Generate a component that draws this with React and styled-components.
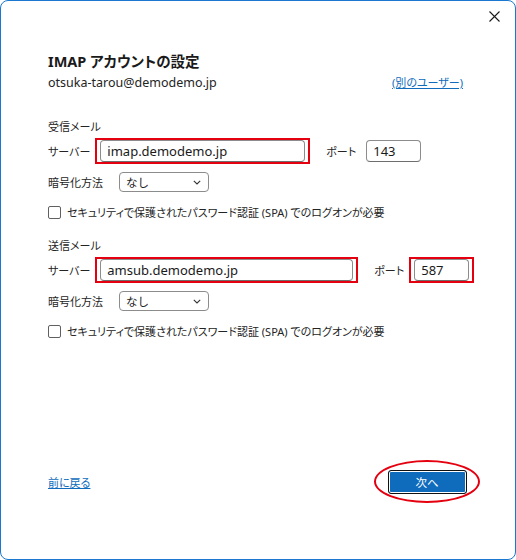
import React from 'react'
import styled, { createGlobalStyle } from 'styled-components'

const GlobalStyle = createGlobalStyle`
  html, body {
    margin: 0;
    padding: 0;
    background: #ffffff;
  }
  body {
    font-family: "Noto Sans", "Noto Sans CJK JP", sans-serif;
    color: #1f1f1f;
  }
`

function App() {
  return (
    <>
      <GlobalStyle />
      <Window>
        <TitleBar>
          <CloseButton aria-label="閉じる">
            <svg width="11" height="11" viewBox="0 0 11 11">
              <path d="M0.5 0.5 L10.5 10.5 M10.5 0.5 L0.5 10.5" stroke="#1a1a1a" strokeWidth="1.1" fill="none" />
            </svg>
          </CloseButton>
        </TitleBar>

        <Main>
          <Heading>IMAP アカウントの設定</Heading>
          <AccountRow>
            <Email>otsuka-tarou@demodemo.jp</Email>
            <Link href="#">(別のユーザー)</Link>
          </AccountRow>

          <ServerSection
            title="受信メール"
            server="imap.demodemo.jp"
            serverWidth={205}
            port="143"
            marked={false}
            top={27}
          />
          <ServerSection
            title="送信メール"
            server="amsub.demodemo.jp"
            serverWidth={253}
            port="587"
            marked={true}
            top={16}
          />
        </Main>

        <Footer>
          <Link href="#">前に戻る</Link>
          <Ring>
            <NextButton>次へ</NextButton>
          </Ring>
        </Footer>
      </Window>
    </>
  )
}

function ServerSection({ title, server, serverWidth, port, marked, top }) {
  return (
    <Section $top={top}>
      <SectionTitle>{title}</SectionTitle>
      <FieldRow>
        <Label>サーバー</Label>
        <Field $marked>
          <TextInput $width={serverWidth} defaultValue={server} readOnly />
        </Field>
        <Label $gap={11}>ポート</Label>
        <Field $marked={marked}>
          <TextInput $width={55} defaultValue={port} readOnly />
        </Field>
      </FieldRow>
      <SelectRow>
        <Label>暗号化方法</Label>
        <Select>
          <span>なし</span>
          <svg width="8" height="5" viewBox="0 0 8 5">
            <path d="M0.8 0.8 L4 4 L7.2 0.8" stroke="#333" strokeWidth="1.1" fill="none" />
          </svg>
        </Select>
      </SelectRow>
      <CheckRow>
        <Box />
        <CheckText>セキュリティで保護されたパスワード認証 (SPA) でのログオンが必要</CheckText>
      </CheckRow>
    </Section>
  )
}

export default App

const Window = styled.div`
  box-sizing: border-box;
  width: 516px;
  height: 560px;
  border: 1px solid #1b78d0;
  border-radius: 8px;
  background: #ffffff;
  display: flex;
  flex-direction: column;
  overflow: hidden;
`

const TitleBar = styled.div`
  height: 29px;
  display: flex;
  justify-content: flex-end;
  align-items: center;
  padding-right: 8px;
`

const CloseButton = styled.button`
  width: 26px;
  height: 26px;
  border: none;
  background: transparent;
  display: flex;
  align-items: center;
  justify-content: center;
  padding: 0;
  margin-top: 1px;
`

const Main = styled.div`
  flex: 1;
  padding: 0 52px 0 47px;
  display: flex;
  flex-direction: column;
`

const Heading = styled.h1`
  margin: 21px 0 0;
  font-size: 14.5px;
  line-height: 20px;
  font-weight: 700;
  color: #1a1a1a;
  font-feature-settings: "palt";
`

const AccountRow = styled.div`
  margin-top: 2px;
  display: flex;
  justify-content: space-between;
  align-items: center;
  height: 18px;
`

const Email = styled.span`
  font-size: 12.5px;
  color: #242424;
`

const Link = styled.a`
  font-size: 11px;
  color: #0f6cbd;
  text-decoration: underline;
  font-feature-settings: "palt";
  white-space: nowrap;
`

const Section = styled.section`
  margin-top: ${p => p.$top}px;
  display: flex;
  flex-direction: column;
`

const SectionTitle = styled.div`
  font-size: 11px;
  line-height: 18px;
  height: 18px;
  color: #242424;
  font-feature-settings: "palt";
`

const FieldRow = styled.div`
  margin-top: 2px;
  display: flex;
  align-items: center;
  gap: 5px;
`

const Label = styled.span`
  flex-shrink: 0;
  white-space: nowrap;
  font-size: 11px;
  color: #242424;
  font-feature-settings: "palt";
  margin-left: ${p => p.$gap || 0}px;
`

const Field = styled.div`
  flex-shrink: 0;
  display: flex;
  padding: 0 3px;
  border: 2px solid ${p => (p.$marked ? '#e5000f' : 'transparent')};
`

const TextInput = styled.input`
  box-sizing: border-box;
  width: ${p => p.$width}px;
  height: 22px;
  border: 1px solid #8c8c8c;
  border-bottom-color: #6e6e6e;
  border-radius: 4px;
  padding: 0 6px;
  font-family: "Noto Sans", sans-serif;
  font-size: 13px;
  color: #1a1a1a;
  outline: none;
  background: #fff;
`

const SelectRow = styled.div`
  margin-top: 8px;
  display: flex;
  align-items: center;
  gap: 16px;
`

const Select = styled.div`
  box-sizing: border-box;
  width: 90px;
  height: 20px;
  border: 1px solid #8c8c8c;
  border-radius: 4px;
  display: flex;
  align-items: center;
  justify-content: space-between;
  padding: 0 7px 0 6px;
  font-size: 11.5px;
  color: #1a1a1a;
`

const CheckRow = styled.label`
  margin-top: 11px;
  height: 18px;
  display: flex;
  align-items: center;
  gap: 6px;
`

const Box = styled.span`
  box-sizing: border-box;
  width: 13px;
  height: 13px;
  border: 1px solid #606060;
  border-radius: 2px;
  background: #fff;
`

const CheckText = styled.span`
  font-size: 11px;
  color: #242424;
  font-feature-settings: "palt";
  white-space: nowrap;
`

const Footer = styled.div`
  display: flex;
  justify-content: space-between;
  align-items: center;
  padding: 0 35px 56px 47px;
`

const Ring = styled.div`
  box-sizing: border-box;
  width: 106px;
  height: 43px;
  border: 2px solid #e5000f;
  border-radius: 50%;
  display: flex;
  align-items: center;
  justify-content: center;
`

const NextButton = styled.button`
  box-sizing: border-box;
  width: 79px;
  height: 24px;
  border: 1px solid #111;
  border-radius: 3px;
  background: #0f6cbd;
  box-shadow: inset 0 0 0 1px #ffffff;
  color: #fff;
  font-family: "Noto Sans", "Noto Sans CJK JP", sans-serif;
  font-size: 11.5px;
  padding: 0;
`
